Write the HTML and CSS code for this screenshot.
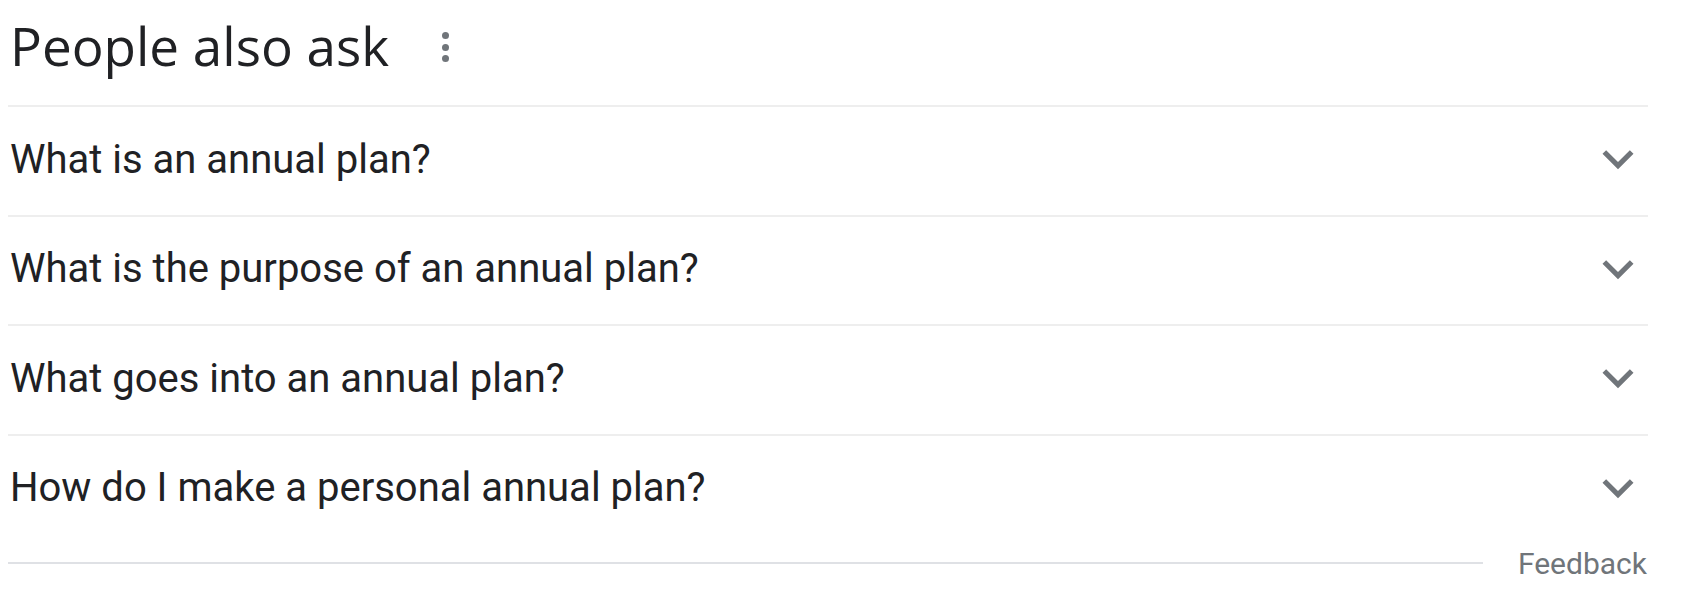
FILE: index.html
```html
<!DOCTYPE html>
<html lang="en">
<head>
    <meta charset="UTF-8">
    <meta name="viewport" content="width=device-width, initial-scale=1.0">
    <title>People also ask</title>
    <link rel="stylesheet" href="styles.css">
</head>
<body>
    <div class="paa">
        <div class="paa-header">
            <h2>People also ask</h2>
            <span class="kebab">
                <i></i><i></i><i></i>
            </span>
        </div>

        <div class="question">
            <span>What is an annual plan?</span>
            <svg class="chevron" viewBox="0 0 24 24"><path d="M16.59 8.59L12 13.17 7.41 8.59 6 10l6 6 6-6z"/></svg>
        </div>
        <div class="question">
            <span>What is the purpose of an annual plan?</span>
            <svg class="chevron" viewBox="0 0 24 24"><path d="M16.59 8.59L12 13.17 7.41 8.59 6 10l6 6 6-6z"/></svg>
        </div>
        <div class="question">
            <span>What goes into an annual plan?</span>
            <svg class="chevron" viewBox="0 0 24 24"><path d="M16.59 8.59L12 13.17 7.41 8.59 6 10l6 6 6-6z"/></svg>
        </div>
        <div class="question">
            <span>How do I make a personal annual plan?</span>
            <svg class="chevron" viewBox="0 0 24 24"><path d="M16.59 8.59L12 13.17 7.41 8.59 6 10l6 6 6-6z"/></svg>
        </div>

        <div class="paa-footer">
            <div class="rule"></div>
            <span class="feedback">Feedback</span>
        </div>
    </div>
</body>
</html>
```

FILE: styles.css
```css
body {
    margin: 0;
    background-color: #fff;
    color: #202124;
    font-family: Roboto, Arial, sans-serif;
}
.paa {
    width: 1640px;
    margin-left: 8px;
}
.paa-header {
    height: 105px;
    display: flex;
    align-items: flex-start;
}
.paa-header h2 {
    margin: 0;
    padding-top: 14px;
    padding-left: 2px;
    font-family: "Open Sans", Lato, sans-serif;
    font-weight: 400;
    font-size: 53px;
    line-height: 64px;
    color: #202124;
}
.kebab {
    display: flex;
    flex-direction: column;
    gap: 4.5px;
    margin-left: 53px;
    margin-top: 32px;
}
.kebab i {
    display: block;
    width: 7px;
    height: 7px;
    border-radius: 50%;
    background-color: #70757a;
}
.question {
    height: 107.5px;
    border-top: 2px solid #eeeeee;
    display: flex;
    align-items: center;
    justify-content: space-between;
    font-size: 40px;
    line-height: 48px;
}
.question span {
    padding-left: 2px;
    margin-top: -2px;
}
.chevron {
    width: 62px;
    height: 62px;
    margin-right: -1px;
    margin-top: -3px;
    fill: #70757a;
}
.paa-footer {
    height: 40px;
    display: flex;
    align-items: center;
}
.rule {
    flex: 1;
    height: 2px;
    background-color: #dfe1e5;
    margin-right: 35px;
}
.feedback {
    font-size: 30px;
    color: #70757a;
    padding-right: 1px;
}
```
